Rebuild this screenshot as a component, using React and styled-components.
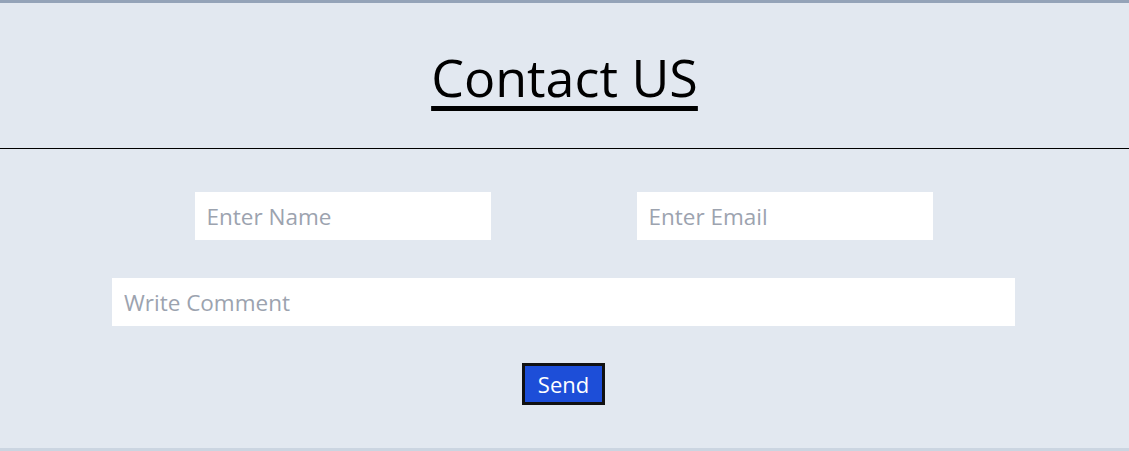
import React from "react";
import styled, { createGlobalStyle } from "styled-components";

const Global = createGlobalStyle`
  html, body { margin: 0; padding: 0; background: #e2e8f0; }
  body { font-family: "Open Sans", "Noto Sans", sans-serif; }
  * { box-sizing: border-box; }
`;

const Page = styled.div`
  background: #e2e8f0;
  border-top: 3px solid #94a3b8;
  border-bottom: 3px solid #cbd5e1;
`;

const Header = styled.header`
  height: 146px;
  display: flex;
  align-items: center;
  justify-content: center;
  border-bottom: 1px solid #000;
`;

const Title = styled.h1`
  margin: 0;
  font-weight: 400;
  font-size: 52px;
  line-height: 1;
  color: #000;
  text-decoration: underline;
  text-decoration-thickness: 5px;
  text-underline-offset: 9px;
  padding-top: 3px;
`;

const Form = styled.form`
  display: flex;
  flex-direction: column;
  align-items: center;
  padding: 43px 2px 43px 0;
  gap: 38px;
`;

const Row = styled.div`
  display: flex;
  justify-content: center;
  gap: 146px;
  width: 903px;
`;

const Field = styled.input`
  width: ${(p) => (p.$wide ? "100%" : "296px")};
  height: 48px;
  border: none;
  outline: none;
  background: #fff;
  padding: 0 12px;
  font-family: "Open Sans", "Noto Sans", sans-serif;
  font-size: 22.5px;
  color: #111;
  &::placeholder { color: #9ca3af; }
`;

const Send = styled.button`
  margin-top: -1px;
  height: 42px;
  padding: 0 13px;
  background: #1d4ed8;
  color: #fff;
  border: 3px solid #111;
  font-family: "Open Sans", "Noto Sans", sans-serif;
  font-size: 22px;
  line-height: 1;
  cursor: pointer;
`;

export default function App() {
  return (
    <Page>
      <Global />
      <Header>
        <Title>Contact US</Title>
      </Header>
      <Form onSubmit={(e) => e.preventDefault()}>
        <Row>
          <Field placeholder="Enter Name" />
          <Field placeholder="Enter Email" />
        </Row>
        <Row>
          <Field $wide placeholder="Write Comment" />
        </Row>
        <Send type="submit">Send</Send>
      </Form>
    </Page>
  );
}
